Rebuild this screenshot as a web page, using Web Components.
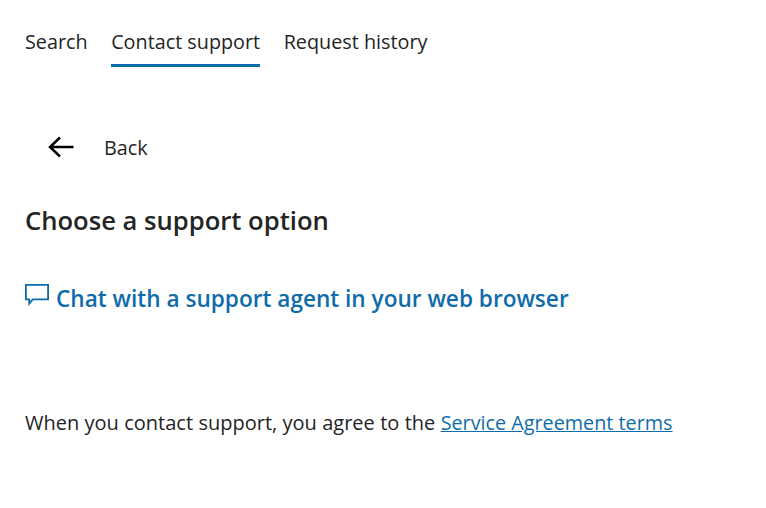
<!DOCTYPE html>
<html lang="en">
<head>
<meta charset="utf-8">
<title>Contact support</title>
<style>
  html, body { margin: 0; background: #fff; }
  body { font-family: "Open Sans", "Noto Sans", sans-serif; color: #242424; }
</style>
</head>
<body>
<support-panel>
  <support-tabs></support-tabs>
  <back-link>Back</back-link>
  <h-title>Choose a support option</h-title>
  <chat-link>Chat with a support agent in your web browser</chat-link>
  <terms-note></terms-note>
</support-panel>
<script>
class SupportPanel extends HTMLElement {
  constructor() {
    super();
    this.attachShadow({ mode: 'open' }).innerHTML = `
      <style>
        :host { display: flex; flex-direction: column; align-items: flex-start; padding: 0 0 0 25px; height: 508px; box-sizing: border-box; }
      </style>
      <slot></slot>`;
  }
}
class SupportTabs extends HTMLElement {
  constructor() {
    super();
    this.attachShadow({ mode: 'open' }).innerHTML = `
      <style>
        :host { display: flex; gap: 23.5px; padding-top: 25px; font-size: 19.8px; line-height: 34px; }
        a { display: block; height: 42px; box-sizing: border-box; color: #242424; }
        a.on { border-bottom: 3px solid #0f6cab; }
      </style>
      <a>Search</a><a class="on">Contact support</a><a>Request history</a>`;
  }
}
class BackLink extends HTMLElement {
  constructor() {
    super();
    this.attachShadow({ mode: 'open' }).innerHTML = `
      <style>
        :host { display: flex; align-items: center; gap: 30px; margin: 64px 0 0 23px; height: 32px; font-size: 19.8px; }
        svg { width: 26px; height: 22px; }
      </style>
      <svg viewBox="0 0 26 22" fill="none" stroke="#000" stroke-width="2.5">
        <path d="M25.500 11H2M12 1.500 2 11l10 9.500"/>
      </svg>
      <slot></slot>`;
  }
}
class HTitle extends HTMLElement {
  constructor() {
    super();
    this.attachShadow({ mode: 'open' }).innerHTML = `
      <style>
        :host { display: block; margin-top: 40px; font-size: 25.6px; line-height: 36px; font-weight: 600; color: #242424; }
      </style>
      <slot></slot>`;
  }
}
class ChatLink extends HTMLElement {
  constructor() {
    super();
    this.attachShadow({ mode: 'open' }).innerHTML = `
      <style>
        :host { display: flex; align-items: center; gap: 7px; margin-top: 43px; font-size: 22.6px; line-height: 34px; font-weight: 600; color: #0f6cab; }
        svg { width: 24px; height: 22px; margin-top: -9px; flex: none; }
      </style>
      <svg viewBox="0 0 24 22" fill="none" stroke="#0f6cab" stroke-width="1.8">
        <path d="M.9.9h22.200v14.400H7.800l-3.600 4.300v-4.300H.9z"/>
      </svg>
      <slot></slot>`;
  }
}
class TermsNote extends HTMLElement {
  constructor() {
    super();
    this.attachShadow({ mode: 'open' }).innerHTML = `
      <style>
        :host { display: block; margin-top: 90px; font-size: 20px; line-height: 34px; color: #242424; word-spacing: .15px; }
        a { color: #0f6cab; text-decoration: underline; font-size: 19.8px; word-spacing: 0; }
      </style>
      When you contact support, you agree to the <a>Service Agreement terms</a>`;
  }
}
customElements.define('support-panel', SupportPanel);
customElements.define('support-tabs', SupportTabs);
customElements.define('back-link', BackLink);
customElements.define('h-title', HTitle);
customElements.define('chat-link', ChatLink);
customElements.define('terms-note', TermsNote);
</script>
</body>
</html>
